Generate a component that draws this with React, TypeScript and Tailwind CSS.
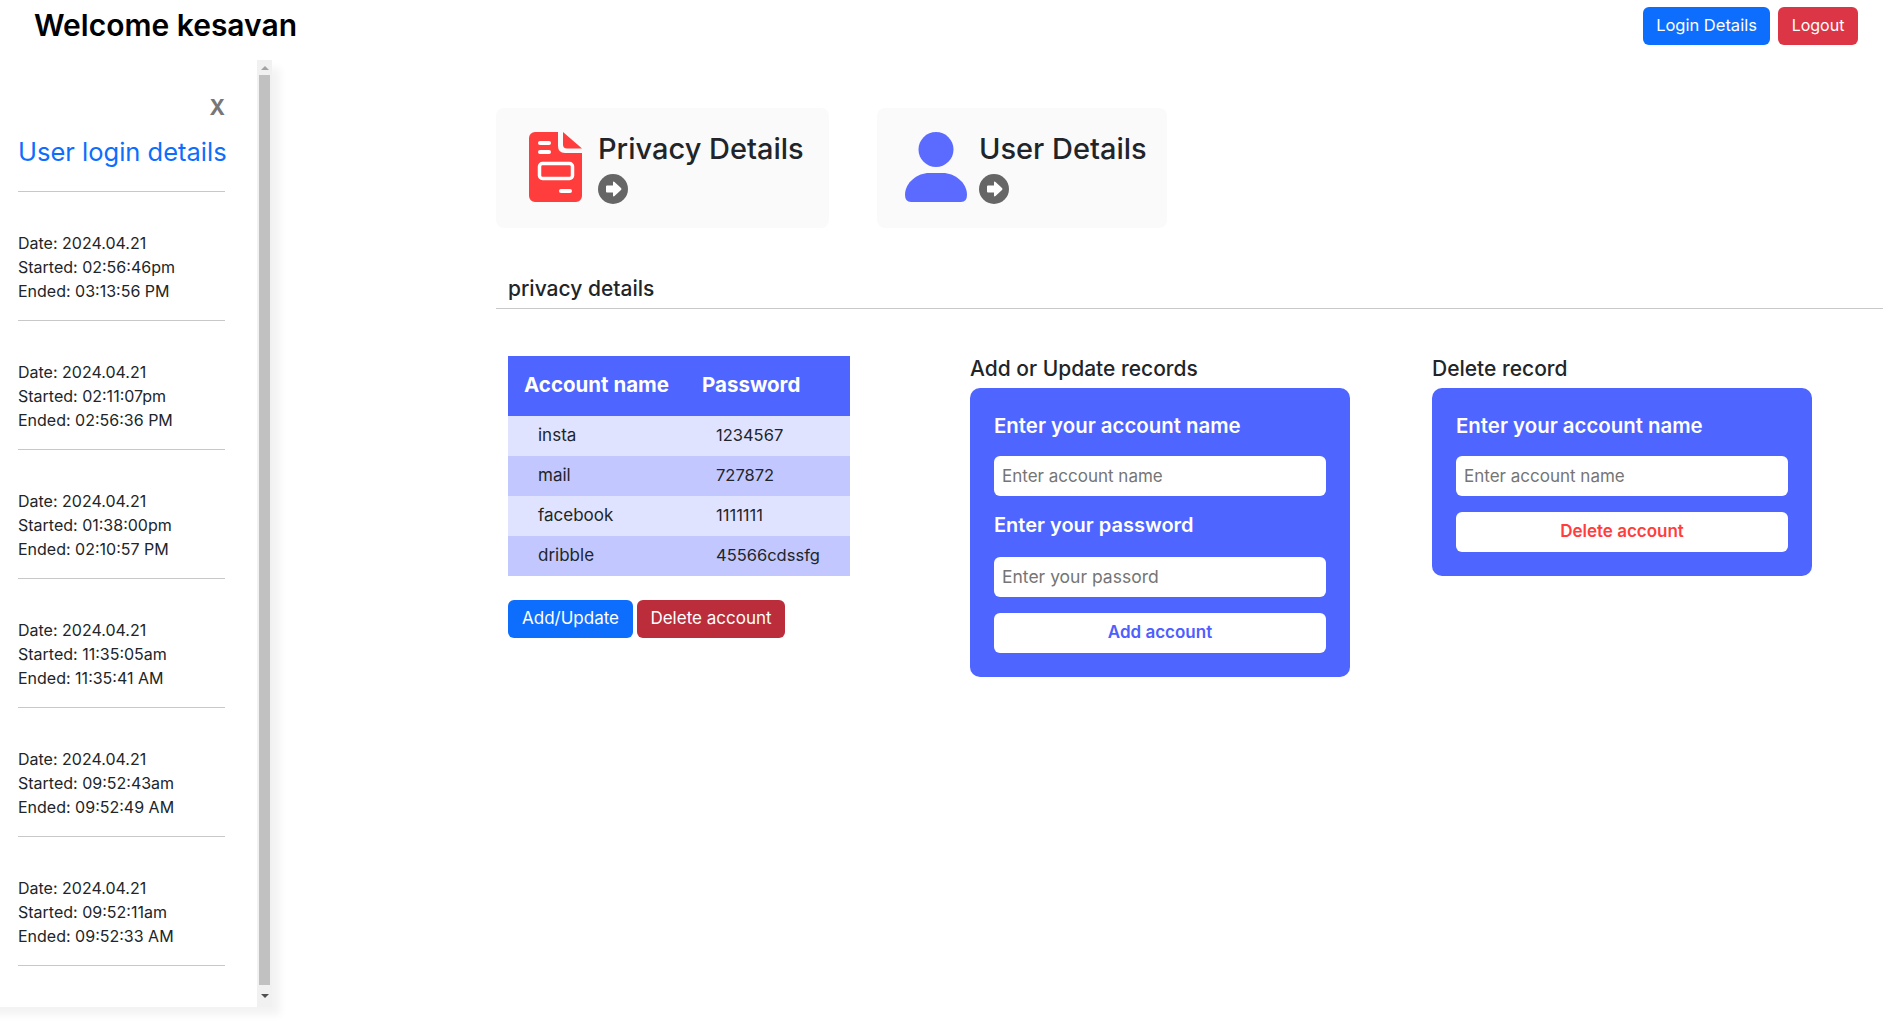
const logins = [
  { date: '2024.04.21', started: '02:56:46pm', ended: '03:13:56 PM' },
  { date: '2024.04.21', started: '02:11:07pm', ended: '02:56:36 PM' },
  { date: '2024.04.21', started: '01:38:00pm', ended: '02:10:57 PM' },
  { date: '2024.04.21', started: '11:35:05am', ended: '11:35:41 AM' },
  { date: '2024.04.21', started: '09:52:43am', ended: '09:52:49 AM' },
  { date: '2024.04.21', started: '09:52:11am', ended: '09:52:33 AM' },
];

const accounts = [
  { name: 'insta', password: '1234567' },
  { name: 'mail', password: '727872' },
  { name: 'facebook', password: '1111111' },
  { name: 'dribble', password: '45566cdssfg' },
];

function FileIcon() {
  return (
    <svg width="53" height="70" viewBox="0 0 53 70" className="shrink-0">
      <path
        d="M6 0H29V14Q29 21 36 21H53V64A6 6 0 0 1 47 70H6A6 6 0 0 1 0 64V6A6 6 0 0 1 6 0Z"
        fill="#ff3d3d"
      />
      <path d="M34 0L53 16.5H38Q34 16.5 34 12.5Z" fill="#ff3d3d" />
      <rect x="9" y="9" width="13" height="4" rx="2" fill="#fff" />
      <rect x="9" y="18" width="13" height="4" rx="2" fill="#fff" />
      <rect x="10.5" y="31.5" width="33" height="15" rx="3" fill="none" stroke="#fff" strokeWidth="3.5" />
      <rect x="30" y="57" width="13" height="4" rx="2" fill="#fff" />
    </svg>
  );
}

function UserIcon() {
  return (
    <svg width="62" height="70" viewBox="0 0 62 70" className="shrink-0">
      <circle cx="31" cy="17.5" r="17.5" fill="#5c6bff" />
      <path d="M0 63C0 50 13 41 24 41H38C49 41 62 50 62 63Q62 70 56 70H6Q0 70 0 63Z" fill="#5c6bff" />
    </svg>
  );
}

function ArrowIcon() {
  return (
    <svg width="30" height="30" viewBox="0 0 30 30" className="mt-[8px] block">
      <circle cx="15" cy="15" r="15" fill="#666666" />
      <path
        d="M9 11.5H15V8.5Q15 7 16.5 8L23 14Q24 15 23 16L16.5 22Q15 23 15 21.5V18.5H9Q8 18.5 8 17.5V12.5Q8 11.5 9 11.5Z"
        fill="#ffffff"
      />
    </svg>
  );
}

function ShortcutCard({ title, icon, className, gap }: { title: string; icon: React.ReactNode; className: string; gap: string }) {
  return (
    <div className={`flex h-[120px] items-start rounded-lg bg-[#fafafa] pt-[24px] ${className}`}>
      {icon}
      <div className={gap}>
        <h2 className="text-[29px] leading-[34px] font-medium text-[#212529]">{title}</h2>
        <ArrowIcon />
      </div>
    </div>
  );
}

export default function App() {
  return (
    <div className="h-[1023px] overflow-hidden bg-white font-['Inter',sans-serif] text-[#212529]">
      {/* Header */}
      <header className="flex h-[60px] items-start justify-between pr-[25px] pl-[34px]">
        <h1 className="mt-[7px] text-[30px] leading-[36px] font-semibold text-black">Welcome kesavan</h1>
        <div className="mt-[7px] flex gap-[8px]">
          <button className="h-[38px] w-[127px] rounded-md bg-[#0d6efd] pb-[1px] text-[16.5px] text-white">Login Details</button>
          <button className="h-[38px] w-[80px] rounded-md bg-[#dc3545] pb-[2px] text-[16px] text-white">Logout</button>
        </div>
      </header>

      <div className="flex items-start">
        {/* Login history drawer, runs off the left edge of the page */}
        <aside className="-ml-[20px] flex h-[947px] w-[292px] shrink-0 bg-white pl-[20px] shadow-[8px_8px_8px_rgba(0,0,0,0.05)]">
          <div className="w-[257px] pr-[32px] pl-[18px]">
            <div className="mt-[36px] text-right text-[21px] leading-[24px] font-bold text-[#777777]">X</div>
            <h3 className="mt-[13px] whitespace-nowrap text-[25.5px] leading-[38px] text-[#0d6efd]">User login details</h3>
            <div className="mt-[20px] border-b border-[#c8c8c8]" />
            {logins.map((item, index) => (
              <div key={index} className="border-b border-[#c8c8c8] pt-[39px] pb-[17px] text-[16px] leading-[24px]">
                <p>Date: {item.date}</p>
                <p>Started: {item.started}</p>
                <p>Ended: {item.ended}</p>
              </div>
            ))}
          </div>
          <div className="flex w-[15px] flex-col items-center bg-[#f1f1f1]">
            <div className="flex h-[15px] items-center justify-center">
              <div className="h-0 w-0 border-x-[4px] border-b-[4px] border-x-transparent border-b-[#a3a3a3]" />
            </div>
            <div className="w-[11px] flex-1 bg-[#c1c1c1]" />
            <div className="flex h-[22px] items-center justify-center">
              <div className="h-0 w-0 border-x-[4px] border-t-[4px] border-x-transparent border-t-[#505050]" />
            </div>
          </div>
        </aside>

        {/* Main content */}
        <main className="flex-1 pt-[48px] pl-[224px]">
          <div className="flex gap-[48px]">
            <ShortcutCard title="Privacy Details" icon={<FileIcon />} gap="ml-[16px]" className="w-[333px] pl-[33px]" />
            <ShortcutCard title="User Details" icon={<UserIcon />} gap="ml-[12px]" className="w-[290px] pl-[28px]" />
          </div>

          <div className="mt-[47px] h-[34px] border-b border-[#c8c8c8] pt-[1px] pl-[12px] text-[21px] leading-[26px] font-medium">
            privacy details
          </div>

          <div className="mt-[47px] grid grid-cols-[462px_462px_462px] pl-[12px]">
            <div>
              <table className="w-[342px] table-fixed border-collapse">
                <thead>
                  <tr className="h-[60px] bg-[#4e65ff] text-left text-[20.5px] text-white">
                    <th className="w-[178px] pb-[2px] pl-[16px] font-bold">Account name</th>
                    <th className="pb-[2px] pl-[16px] font-bold">Password</th>
                  </tr>
                </thead>
                <tbody>
                  {accounts.map((row, index) => (
                    <tr key={row.name} className={`h-[40px] ${index % 2 === 0 ? 'bg-[#e0e3ff]' : 'bg-[#c2c8ff]'}`}>
                      <td className="pb-[1px] pl-[30px] text-[17px]">{row.name}</td>
                      <td className="pb-[1px] pl-[30px] text-[16.5px]">{row.password}</td>
                    </tr>
                  ))}
                </tbody>
              </table>
              <div className="mt-[24px] flex gap-[4px]">
                <button className="h-[38px] w-[125px] rounded-md bg-[#0d6efd] pb-[1px] text-[17px] text-white">Add/Update</button>
                <button className="h-[38px] w-[148px] rounded-md bg-[#bb2d3b] pb-[1px] text-[17px] text-white">Delete account</button>
              </div>
            </div>

            <div>
              <h4 className="mb-[7px] pt-[1px] text-[21px] leading-[24px] font-medium">Add or Update records</h4>
              <form className="w-[380px] rounded-[10px] bg-[#4e65ff] px-[24px] pt-[23px] pb-[24px]">
                <label className="mb-[15px] block text-[20.4px] leading-[30px] font-semibold text-white">Enter your account name</label>
                <input placeholder="Enter account name" className="h-[40px] w-full rounded-md bg-white px-[8px] pb-[1px] text-[17px] placeholder:text-[#757575]" />
                <label className="mt-[14px] mb-[17px] block text-[20px] leading-[30px] font-semibold text-white">Enter your password</label>
                <input placeholder="Enter your passord" className="h-[40px] w-full rounded-md bg-white px-[8px] pb-[1px] text-[17.5px] placeholder:text-[#757575]" />
                <button type="button" className="mt-[16px] h-[40px] w-full rounded-md bg-white pb-[1px] text-[17px] font-semibold text-[#4e5eff]">Add account</button>
              </form>
            </div>

            <div>
              <h4 className="mb-[7px] pt-[1px] text-[21px] leading-[24px] font-medium">Delete record</h4>
              <form className="w-[380px] rounded-[10px] bg-[#4e65ff] px-[24px] pt-[23px] pb-[24px]">
                <label className="mb-[15px] block text-[20.4px] leading-[30px] font-semibold text-white">Enter your account name</label>
                <input placeholder="Enter account name" className="h-[40px] w-full rounded-md bg-white px-[8px] pb-[1px] text-[17px] placeholder:text-[#757575]" />
                <button type="button" className="mt-[16px] h-[40px] w-full rounded-md bg-white pb-[1px] text-[17px] font-semibold text-[#ff3d3d]">Delete account</button>
              </form>
            </div>
          </div>
        </main>
      </div>
    </div>
  );
}
